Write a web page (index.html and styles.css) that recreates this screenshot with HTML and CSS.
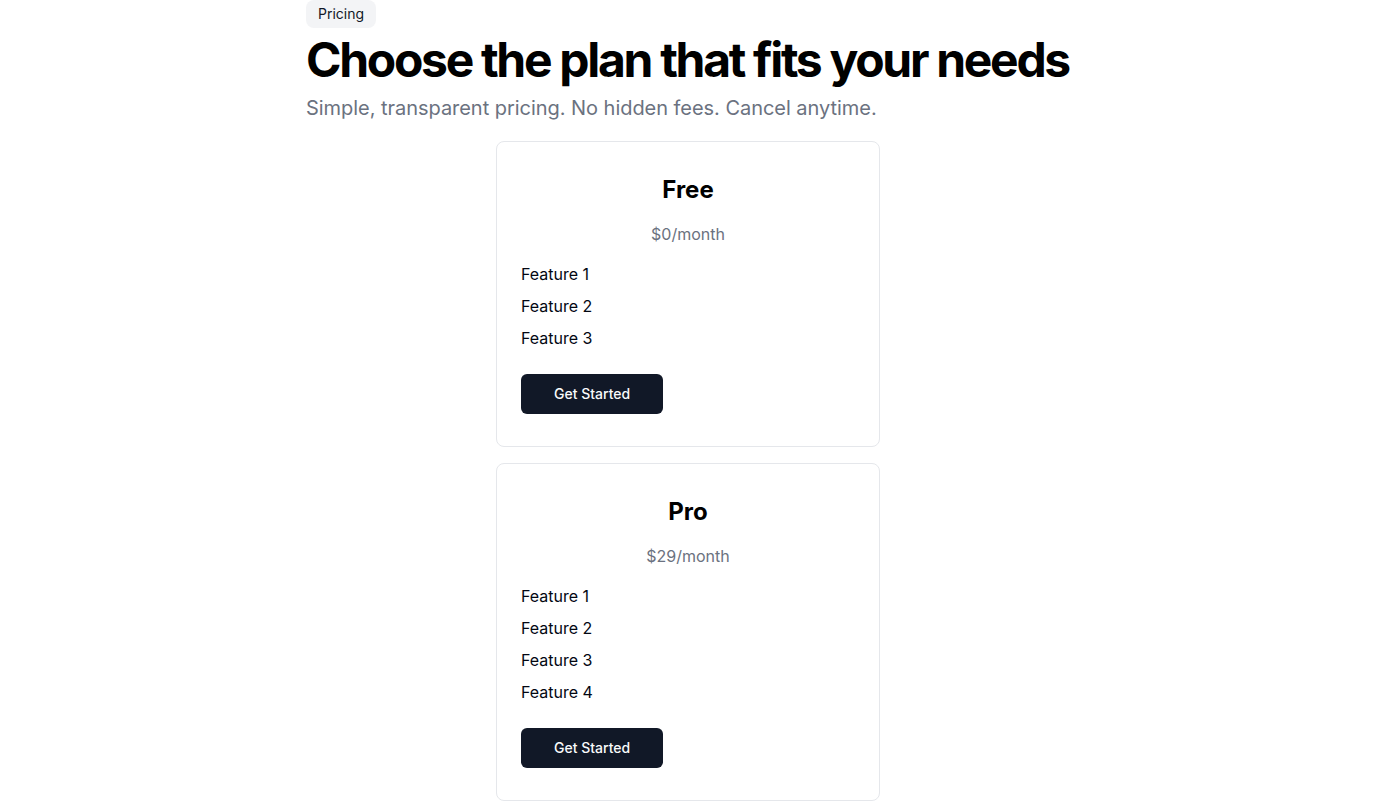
FILE: index.html
```html
<!DOCTYPE html>
<html lang="en">
<head>
<meta charset="utf-8">
<title>Pricing</title>
<link rel="stylesheet" href="styles.css">
</head>
<body>
<main class="container">
  <span class="pill">Pricing</span>
  <h1 class="title">Choose the plan that fits your needs</h1>
  <p class="subtitle">Simple, transparent pricing. No hidden fees. Cancel anytime.</p>
  <div class="plans">
    <section class="card">
      <h2 class="plan-name">Free</h2>
      <p class="price">$0/month</p>
      <ul class="features">
        <li>Feature 1</li>
        <li>Feature 2</li>
        <li>Feature 3</li>
      </ul>
      <button class="btn">Get Started</button>
    </section>
    <section class="card">
      <h2 class="plan-name">Pro</h2>
      <p class="price">$29/month</p>
      <ul class="features">
        <li>Feature 1</li>
        <li>Feature 2</li>
        <li>Feature 3</li>
        <li>Feature 4</li>
      </ul>
      <button class="btn">Get Started</button>
    </section>
  </div>
</main>
</body>
</html>
```
FILE: styles.css
```css
* { box-sizing: border-box; }
html, body { margin: 0; padding: 0; background: #ffffff; }
body {
  font-family: Inter, "Noto Sans", "Liberation Sans", sans-serif;
  color: #030712;
}
.container {
  max-width: 764px;
  margin: 0 auto;
  display: flex;
  flex-direction: column;
  align-items: flex-start;
}
.pill {
  display: inline-block;
  background: #f3f4f6;
  border-radius: 8px;
  padding: 4px 12px;
  font-size: 14px;
  line-height: 20px;
  color: #111827;
}
.title {
  margin: 8px 0 0;
  font-size: 48px;
  line-height: 1;
  font-weight: 700;
  letter-spacing: -0.048em;
  white-space: nowrap;
  color: #000000;
}
.subtitle {
  margin: 10px 0 0;
  font-size: 20px;
  line-height: 28px;
  letter-spacing: -0.002em;
  color: #6b7280;
}
.plans {
  align-self: stretch;
  margin-top: 19px;
  display: flex;
  flex-direction: column;
  align-items: center;
  gap: 16px;
}
.card {
  width: 384px;
  border: 1px solid #e5e7eb;
  border-radius: 8px;
  padding: 32px 24px;
  background: #fff;
}
.plan-name {
  margin: 0;
  text-align: center;
  font-size: 24px;
  line-height: 32px;
  font-weight: 700;
  color: #000000;
}
.price {
  margin: 16px 0 0;
  text-align: center;
  font-size: 16px;
  line-height: 24px;
  color: #6b7280;
}
.features {
  list-style: none;
  margin: 16px 0 0;
  padding: 0;
  display: flex;
  flex-direction: column;
  gap: 8px;
  font-size: 16px;
  line-height: 24px;
  color: #030712;
}
.btn {
  margin-top: 24px;
  display: inline-block;
  height: 40px;
  padding: 0 33px;
  border: none;
  border-radius: 6px;
  background: #111827;
  color: #f9fafb;
  font-family: inherit;
  font-size: 14px;
  font-weight: 500;
  line-height: 20px;
}
```
